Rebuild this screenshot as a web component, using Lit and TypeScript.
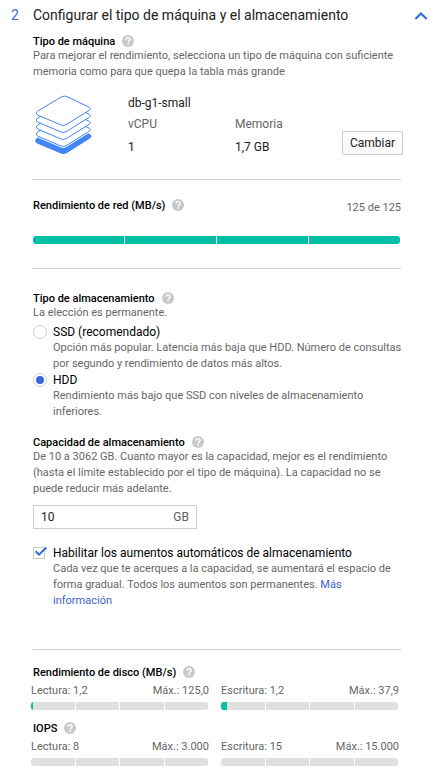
import { LitElement, html, svg, css } from "lit";
import { customElement, property } from "lit/decorators.js";

@customElement("help-icon")
class HelpIcon extends LitElement {
  static styles = css`
    :host { display: block; width: 12px; height: 12px; flex: none; }
    svg { display: block; }
  `;
  render() {
    return html`<svg width="12" height="12" viewBox="0 0 12 12">
      <circle cx="6" cy="6" r="6" fill="#c8c8c8" />
      <path d="M3.900 4.800C3.900 3.400 4.700 2.600 6 2.600s2.100.8 2.100 1.900c0 1.300-1.900 1.500-1.900 2.900" fill="none" stroke="#fff" stroke-width="1.4" />
      <rect x="5.4" y="8.2" width="1.5" height="1.5" fill="#fff" />
    </svg>`;
  }
}

@customElement("meter-bar")
class MeterBar extends LitElement {
  @property({ type: Number }) fill = 0;
  @property({ type: Boolean, reflect: true }) wide = false;
  static styles = css`
    :host { display: block; }
    .track { position: relative; height: 8px; border-radius: 3px; overflow: hidden; background: #e0e0e0; }
    .value { height: 8px; background: #00bfa5; }
    .ticks { position: absolute; inset: 0; display: grid; grid-template-columns: 45px 44px 45px 1fr; }
    :host([wide]) .ticks { grid-template-columns: 92px 92px 92px 1fr; }
    .tick { border-right: 1px solid #fff; }
    .tick:last-child { border: 0; }
  `;
  render() {
    return html`<div class="track">
      <div class="value" style="width:${this.fill}px"></div>
      <div class="ticks">${[0, 1, 2, 3].map(() => html`<div class="tick"></div>`)}</div>
    </div>`;
  }
}

const TILE = "M4.500 16.200 28.800 1.700Q31.500.300 34.200 1.700L56.300 12.300Q58.700 13.700 56.300 15.200L33 29.800Q30.300 31.200 27.600 29.800L4.500 20Q2 18.200 4.500 16.200Z";

@customElement("app-root")
class AppRoot extends LitElement {
  static styles = css`
    :host {
      display: block; width: 448px; height: 776px; overflow: hidden; background: #fff;
      font: 11px/16px Roboto, "Liberation Sans", sans-serif; color: #666;
    }
    * { box-sizing: border-box; }
    .head { display: flex; height: 30px; align-items: center; font-size: 14px; color: #212121; padding-left: 11px; }
    .num { width: 22px; color: #3367d6; }
    .title { width: 381px; white-space: nowrap; }
    .body { margin-left: 33px; width: 368px; }
    .label { display: flex; align-items: center; gap: 6.9px; height: 14px; font-weight: 500; color: #000; white-space: nowrap; }
    .label span { padding-top: 1px; }
    .line { white-space: nowrap; }
    .first { margin-top: 4px; }
    .machine { display: flex; height: 99px; padding-top: 15px; }
    .stack { width: 95px; flex: none; }
    .stack svg { display: block; }
    .specs { width: 214px; flex: none; font-size: 12px; }
    .name { color: #212121; height: 16px; }
    .grid { display: grid; grid-template-columns: 107px 1fr; grid-template-rows: 16px 16px; row-gap: 7px; margin-top: 5px; }
    .dark { color: #212121; }
    .btn { width: 61px; height: 24px; margin-top: 36px; flex: none; border: 1px solid #ccc; border-radius: 1px; font-size: 12px; line-height: 22px; text-align: center; color: #212121; background: linear-gradient(#fff, #f8f8f8); }
    hr { margin: 0; border: 0; height: 1px; background: #d0d0d0; }
    .net { display: flex; justify-content: space-between; height: 56px; padding-top: 18px; }
    .quota { margin-top: 2px; }
    .netbar { width: 367px; height: 32px; }
    .types { margin-top: 22px; }
    .option { display: grid; grid-template-columns: 20px 1fr; }
    .o-title { font-size: 12px; color: #000; height: 16px; white-space: nowrap; }
    .radio { width: 14px; height: 14px; border: 1px solid #ccc; border-radius: 50%; display: grid; place-items: center; margin-top: 1px; }
    .dot { width: 8px; height: 8px; border-radius: 50%; background: #3367d6; }
    .options { display: grid; margin-top: 3px; }
    .capacity { margin-top: 15px; }
    .field { display: flex; justify-content: space-between; width: 164px; height: 24px; margin-top: 8px; padding: 0 7px; border: 1px solid #ccc; font-size: 12px; line-height: 22px; color: #616161; }
    .auto { margin-top: 16px; }
    .box { width: 14px; height: 14px; margin-top: 1px; }
    .box svg { display: block; overflow: visible; }
    .link { color: #3b5fd0; }
    .last { margin-top: 40px; }
    .disk { margin-top: 15px; }
    .iops { margin-top: 11px; }
    .pair { display: grid; grid-template-columns: 177px 177px; column-gap: 13px; margin: 4px 0 0 -2px; }
    .read { display: flex; justify-content: space-between; height: 19px; margin-right: -1px; white-space: nowrap; }
  `;

  label(text: string) {
    return html`<div class="label"><span>${text}</span><help-icon></help-icon></div>`;
  }
  lines(items: string[]) {
    return items.map((t) => html`<div class="line">${t}</div>`);
  }
  reading(name: string, max: string, fill: number) {
    return html`<div>
      <div class="read"><span>${name}</span><span>Máx.: ${max}</span></div>
      <meter-bar .fill=${fill}></meter-bar>
    </div>`;
  }

  render() {
    return html`
      <div class="head">
        <span class="num">2</span>
        <span class="title">Configurar el tipo de máquina y el almacenamiento</span>
        <svg width="14" height="10" viewBox="0 0 14 10"><path d="M1.400 9 7 3.400l5.600 5.600" fill="none" stroke="#3367d6" stroke-width="2.1" /></svg>
      </div>
      <div class="body">
        <div class="first">${this.label("Tipo de máquina")}</div>
        ${this.lines(["Para mejorar el rendimiento, selecciona un tipo de máquina con suficiente", "memoria como para que quepa la tabla más grande"])}
        <div class="machine">
          <div class="stack">
            <svg width="62" height="62" viewBox="0 0 62 62" stroke-linejoin="round">
              <path d=${TILE} transform="translate(0 27.500)" fill="#4285f4" stroke="#4285f4" stroke-width="2" />
              <path d=${TILE} transform="translate(0 22)" fill="#fff" stroke="#fff" />
              ${[21, 14, 7, 0].map((y) => svg`<path d=${TILE} transform="translate(0 ${y})" fill="#fff" stroke="#4285f4" />`)}
            </svg>
          </div>
          <div class="specs">
            <div class="name">db-g1-small</div>
            <div class="grid">
              <span>vCPU</span><span>Memoria</span>
              <span class="dark">1</span><span class="dark">1,7 GB</span>
            </div>
          </div>
          <div class="btn">Cambiar</div>
        </div>
        <hr />
        <div class="net">${this.label("Rendimiento de red (MB/s)")}<span class="quota">125 de 125</span></div>
        <div class="netbar"><meter-bar wide .fill=${367}></meter-bar></div>
        <hr />
        <div class="types">${this.label("Tipo de almacenamiento")}</div>
        <div class="line">La elección es permanente.</div>
        <div class="options">
          <div class="option">
            <div class="radio"></div>
            <div>
              <div class="o-title">SSD (recomendado)</div>
              ${this.lines(["Opción más popular. Latencia más baja que HDD. Número de consultas", "por segundo y rendimiento de datos más altos."])}
            </div>
          </div>
          <div class="option">
            <div class="radio"><div class="dot"></div></div>
            <div>
              <div class="o-title">HDD</div>
              ${this.lines(["Rendimiento más bajo que SSD con niveles de almacenamiento", "inferiores."])}
            </div>
          </div>
        </div>
        <div class="capacity">${this.label("Capacidad de almacenamiento")}</div>
        ${this.lines(["De 10 a 3062 GB. Cuanto mayor es la capacidad, mejor es el rendimiento", "(hasta el límite establecido por el tipo de máquina). La capacidad no se", "puede reducir más adelante."])}
        <div class="field"><span class="dark">10</span><span>GB</span></div>
        <div class="option auto">
          <div class="box">
            <svg width="14" height="14" viewBox="0 0 14 14">
              <rect x=".5" y="1.500" width="11" height="11" fill="#fff" stroke="#ccc" />
              <path d="M2.700 5.300 6 8.600 13.300 1.500" fill="none" stroke="#3367d6" stroke-width="2" />
            </svg>
          </div>
          <div>
            <div class="o-title">Habilitar los aumentos automáticos de almacenamiento</div>
            <div class="line">Cada vez que te acerques a la capacidad, se aumentará el espacio de</div>
            <div class="line">forma gradual. Todos los aumentos son permanentes. <span class="link">Más</span></div>
            <div class="line link">información</div>
          </div>
        </div>
        <hr class="last" />
        <div class="disk">${this.label("Rendimiento de disco (MB/s)")}</div>
        <div class="pair">${this.reading("Lectura: 1,2", "125,0", 2)}${this.reading("Escritura: 1,2", "37,9", 6)}</div>
        <div class="iops">${this.label("IOPS")}</div>
        <div class="pair">${this.reading("Lectura: 8", "3.000", 0)}${this.reading("Escritura: 15", "15.000", 0)}</div>
      </div>
    `;
  }
}
